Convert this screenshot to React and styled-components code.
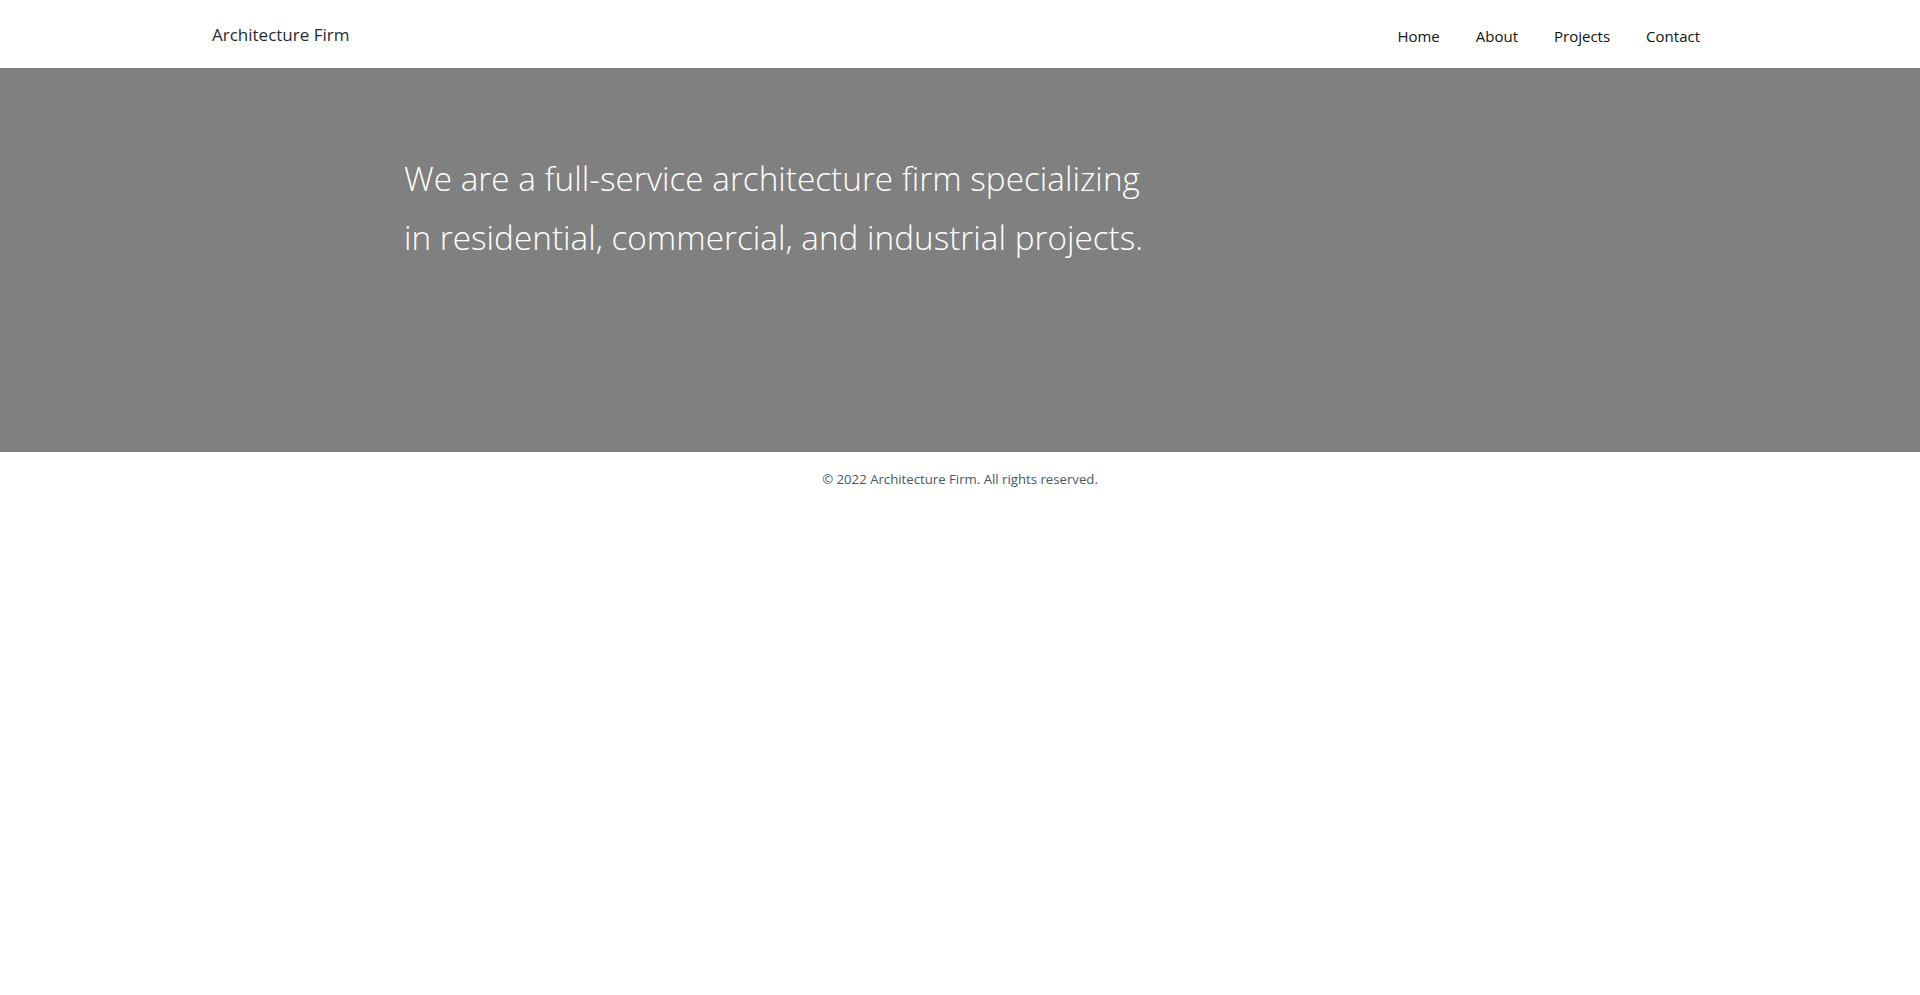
import React from 'react';
import styled, {createGlobalStyle} from 'styled-components';

const GlobalStyle = createGlobalStyle`
  * {
    box-sizing: border-box;
  }
  body {
    margin: 0;
    background: #ffffff;
    font-family: 'Open Sans', 'Noto Sans', sans-serif;
    color: #111827;
  }
`;

const Header = styled.header`
  background: #ffffff;
`;

const HeaderInner = styled.div`
  display: flex;
  align-items: flex-start;
  justify-content: space-between;
  height: 68px;
  padding: 21px 220px 0 212px;
`;

const Logo = styled.a`
  font-size: 17px;
  line-height: 28px;
  color: #1f2937;
  text-decoration: none;
`;

const Nav = styled.nav`
  display: flex;
  gap: 36px;
  padding-top: 3px;
`;

const NavLink = styled.a`
  font-size: 15px;
  line-height: 24px;
  color: #111111;
  text-decoration: none;
`;

const Hero = styled.section`
  height: 384px;
  background: #808080;
  padding: 81px 0 0 404px;
`;

const HeroText = styled.p`
  margin: 0;
  max-width: 760px;
  font-size: 33.3px;
  font-weight: 300;
  line-height: 58.5px;
  color: #ffffff;
`;

const Footer = styled.footer`
  padding: 17px 0 16px;
  text-align: center;
`;

const Copyright = styled.p`
  margin: 0;
  font-size: 13.2px;
  line-height: 20px;
  color: #4b5563;
`;

const links = ['Home', 'About', 'Projects', 'Contact'];

const App = () => (
  <>
    <GlobalStyle />
    <Header>
      <HeaderInner>
        <Logo href="#">Architecture Firm</Logo>
        <Nav>
          {links.map((l) => (
            <NavLink key={l} href="#">
              {l}
            </NavLink>
          ))}
        </Nav>
      </HeaderInner>
    </Header>
    <Hero>
      <HeroText>
        We are a full-service architecture firm specializing
        <br />
        in residential, commercial, and industrial projects.
      </HeroText>
    </Hero>
    <Footer>
      <Copyright>© 2022 Architecture Firm. All rights reserved.</Copyright>
    </Footer>
  </>
);

export default App;
